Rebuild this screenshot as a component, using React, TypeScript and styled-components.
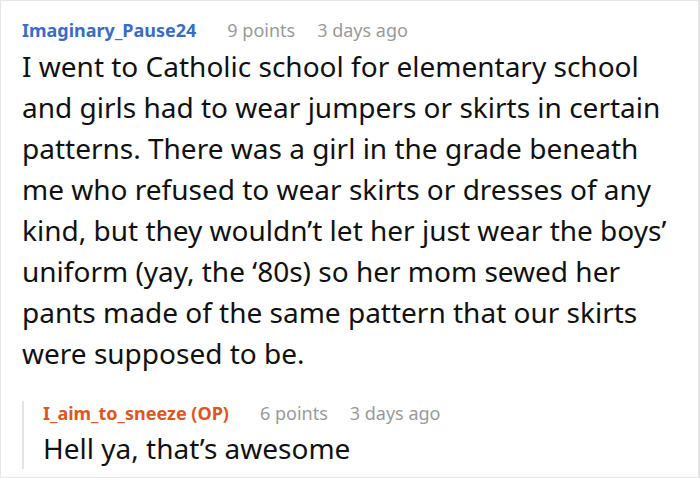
import React from "react";
import styled, { createGlobalStyle } from "styled-components";

const GlobalStyle = createGlobalStyle`
  html, body {
    margin: 0;
    padding: 0;
    background: #ffffff;
  }
  body {
    font-family: "Noto Sans", "Open Sans", sans-serif;
  }
`;

const Card = styled.section`
  box-sizing: border-box;
  width: 700px;
  height: 478px;
  border: 1px solid #e6e6e6;
  border-right-width: 2px;
  padding: 17px 0 0 21px;
  background: #ffffff;
`;

const Meta = styled.div`
  display: flex;
  align-items: baseline;
  font-size: 18px;
  line-height: 24px;
  color: #9a9a9a;
`;

const Author = styled.span<{ $op?: boolean }>`
  font-weight: 700;
  color: ${(p) => (p.$op ? "#dc5622" : "#3a6cc3")};
  margin-right: 31px;
`;

const Points = styled.span`
  margin-right: 22px;
`;

const Body = styled.p<{ $top: number }>`
  margin: ${(p) => p.$top}px 0 0;
  font-size: 28px;
  line-height: 41px;
  color: #111111;
`;

const Line = styled.span`
  display: block;
  white-space: nowrap;
`;

const Reply = styled.div`
  margin-top: 27px;
  border-left: 2px solid #e3e3e3;
  padding-left: 19px;
`;

const Comment = ({
  author,
  points,
  age,
  op,
  top,
  lines,
}: {
  author: string;
  points: number;
  age: string;
  op?: boolean;
  top: number;
  lines: string[];
}) => (
  <>
    <Meta>
      <Author $op={op}>{author}</Author>
      <Points>{points} points</Points>
      <span>{age}</span>
    </Meta>
    <Body $top={top}>
      {lines.map((l) => (
        <Line key={l}>{l}</Line>
      ))}
    </Body>
  </>
);

const mainLines = [
  "I went to Catholic school for elementary school",
  "and girls had to wear jumpers or skirts in certain",
  "patterns. There was a girl in the grade beneath",
  "me who refused to wear skirts or dresses of any",
  "kind, but they wouldn’t let her just wear the boys’",
  "uniform (yay, the ‘80s) so her mom sewed her",
  "pants made of the same pattern that our skirts",
  "were supposed to be.",
];

const App = () => {
  return (
    <>
      <GlobalStyle />
      <Card>
        <Comment
          author="Imaginary_Pause24"
          points={9}
          age="3 days ago"
          top={4}
          lines={mainLines}
        />
        <Reply>
          <Comment
            author="I_aim_to_sneeze (OP)"
            points={6}
            age="3 days ago"
            op
            top={3}
            lines={["Hell ya, that’s awesome"]}
          />
        </Reply>
      </Card>
    </>
  );
};

export default App;
